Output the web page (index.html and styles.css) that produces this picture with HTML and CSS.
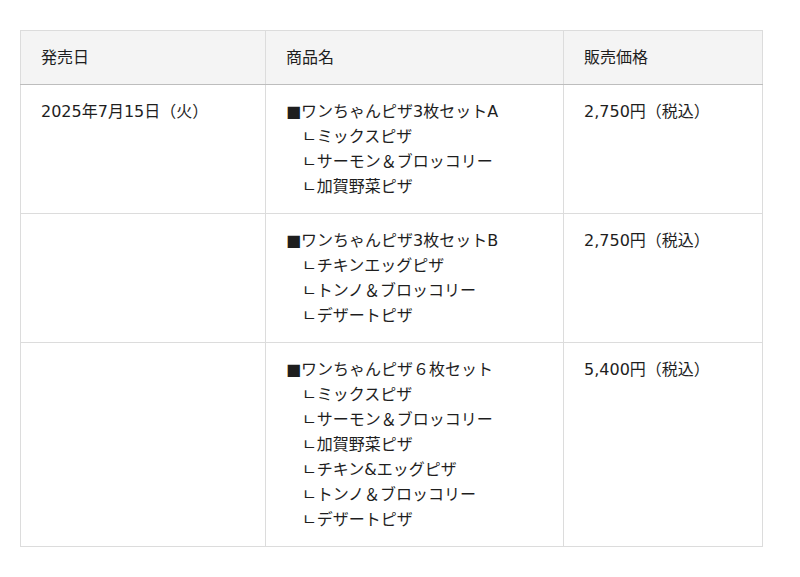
FILE: index.html
```html
<!DOCTYPE html>
<html lang="ja">
<head>
<meta charset="utf-8">
<title>商品一覧</title>
<link rel="stylesheet" href="styles.css">
</head>
<body>
<table class="menu">
  <colgroup>
    <col class="c-date">
    <col class="c-name">
    <col class="c-price">
  </colgroup>
  <thead>
    <tr><th>発売日</th><th>商品名</th><th>販売価格</th></tr>
  </thead>
  <tbody>
    <tr>
      <td>2025年7月15日（火）</td>
      <td>■ワンちゃんピザ3枚セットA<br>　ㄴミックスピザ<br>　ㄴサーモン＆ブロッコリー<br>　ㄴ加賀野菜ピザ</td>
      <td>2,750円（税込）</td>
    </tr>
    <tr>
      <td></td>
      <td>■ワンちゃんピザ3枚セットB<br>　ㄴチキンエッグピザ<br>　ㄴトンノ＆ブロッコリー<br>　ㄴデザートピザ</td>
      <td>2,750円（税込）</td>
    </tr>
    <tr>
      <td></td>
      <td>■ワンちゃんピザ６枚セット<br>　ㄴミックスピザ<br>　ㄴサーモン＆ブロッコリー<br>　ㄴ加賀野菜ピザ<br>　ㄴチキン&amp;エッグピザ<br>　ㄴトンノ＆ブロッコリー<br>　ㄴデザートピザ</td>
      <td>5,400円（税込）</td>
    </tr>
  </tbody>
</table>
</body>
</html>
```
FILE: styles.css
```css
html, body {
  margin: 0;
  background: #fff;
}
body {
  padding: 30px 20px;
  font-family: "DejaVu Sans", "Noto Sans CJK JP", sans-serif;
  font-size: 16px;
  line-height: 25px;
  color: #1e1e1e;
}
.menu {
  border-collapse: collapse;
  width: 742px;
  table-layout: fixed;
}
.c-date { width: 245px; }
.c-name { width: 298px; }
.c-price { width: 199px; }
.menu th,
.menu td {
  border: 1px solid #dcdcdc;
  text-align: left;
  vertical-align: top;
  padding: 14px 20px 14px 20px;
}
.menu th {
  font-weight: normal;
  background: #f4f4f4;
  padding: 14px 20px 14px 20px;
  border-bottom: 1px solid #bdbdbd;
}
```
